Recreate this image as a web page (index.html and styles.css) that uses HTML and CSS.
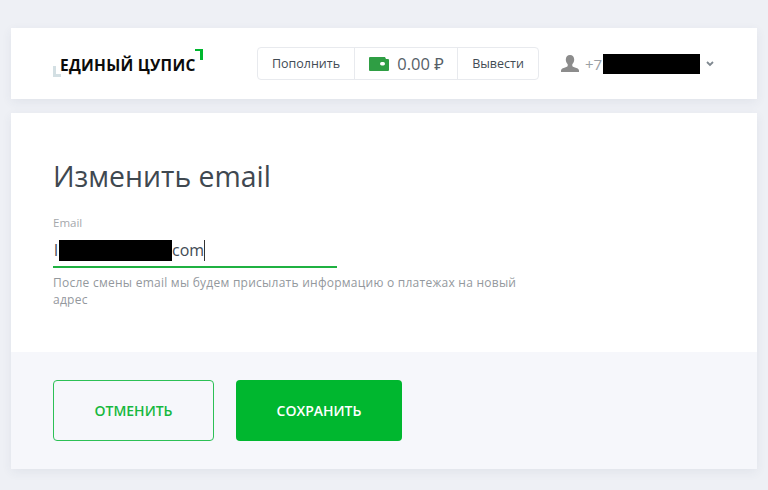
FILE: index.html
```html
<!DOCTYPE html>
<html lang="ru">
<head>
    <meta charset="UTF-8">
    <meta name="viewport" content="width=device-width, initial-scale=1.0">
    <title>Изменить email</title>
    <link rel="stylesheet" href="styles.css">
</head>
<body>
    <header class="topbar card">
        <div class="logo">
            <span class="logo-corner logo-corner-left"></span>
            <span class="logo-text">ЕДИНЫЙ ЦУПИС</span>
            <span class="logo-corner logo-corner-right"></span>
        </div>
        <div class="wallet">
            <a class="wallet-link wallet-topup">Пополнить</a>
            <div class="wallet-balance">
                <svg class="wallet-icon" width="20" height="14" viewBox="0 0 20 14">
                    <path d="M1 0h15l1 2h2a1 1 0 0 1 1 1v10a1 1 0 0 1-1 1H1a1 1 0 0 1-1-1V1a1 1 0 0 1 1-1z" fill="#2f9e44"/>
                    <rect x="11" y="5" width="5" height="3.5" rx="1.7" fill="#fff"/>
                </svg>
                <span class="wallet-sum">0.00 ₽</span>
            </div>
            <a class="wallet-link wallet-withdraw">Вывести</a>
        </div>
        <div class="user">
            <svg class="user-icon" width="18" height="17" viewBox="0 0 18 17">
                <path d="M9 0c2.6 0 4.2 1.9 4.2 4.6 0 1.9-.8 3.6-1.9 4.6v1.6c0 .7 1 1.1 2.6 1.6 2 .6 4.1 1.2 4.1 3.1V17H0v-1.5c0-1.9 2.1-2.5 4.1-3.1 1.6-.5 2.6-.9 2.6-1.6V9.2C5.6 8.2 4.8 6.5 4.8 4.6 4.8 1.9 6.4 0 9 0z" fill="#8c8c8c"/>
            </svg>
            <span class="user-code">+7</span>
            <span class="redact user-redact"></span>
            <svg class="user-arrow" width="8" height="6" viewBox="0 0 8 6">
                <path d="M1 1l3 3 3-3" fill="none" stroke="#7f8890" stroke-width="1.8"/>
            </svg>
        </div>
    </header>

    <main class="form card">
        <div class="form-body">
            <h1 class="form-title">Изменить email</h1>
            <div class="field">
                <label class="field-label">Email</label>
                <div class="field-value">
                    <span>l</span><span class="redact value-redact"></span><span>com</span><span class="caret"></span>
                </div>
            </div>
            <p class="field-hint">После смены email мы будем присылать информацию о платежах на новый адрес</p>
        </div>
        <div class="form-footer">
            <button class="btn btn-cancel">ОТМЕНИТЬ</button>
            <button class="btn btn-save">СОХРАНИТЬ</button>
        </div>
    </main>
</body>
</html>
```

FILE: styles.css
```css
* { box-sizing: border-box; }
body {
    margin: 0;
    padding: 28px 11px 21px;
    background: #eef0f5;
    font-family: 'Open Sans', 'Noto Sans', sans-serif;
    color: #424b54;
}
.card { background: #fff; box-shadow: 0 3px 10px rgba(60, 70, 100, 0.07); }

.topbar {
    display: flex;
    align-items: center;
    height: 71px;
    padding-left: 42px;
    margin-bottom: 14px;
}
.logo { position: relative; width: 204px; padding-left: 7px; padding-top: 2px; }
.logo-text {
    display: block;
    font-size: 15.5px;
    font-weight: 700;
    line-height: 22px;
    letter-spacing: 0.25px;
    color: #0b0b0b;
    white-space: nowrap;
}
.logo-corner { position: absolute; width: 8px; height: 11px; }
.logo-corner-left {
    left: 0;
    top: 14px;
    border-left: 3px solid #d3dfe3;
    border-bottom: 3px solid #d3dfe3;
}
.logo-corner-right {
    left: 142px;
    top: -3px;
    border-right: 3px solid #00b72f;
    border-top: 2px solid #00b72f;
}

.wallet {
    display: flex;
    height: 33px;
    border: 1px solid #e8eaee;
    border-radius: 4px;
    font-size: 12.5px;
}
.wallet-link, .wallet-balance { display: flex; align-items: center; justify-content: center; }
.wallet-topup { width: 97px; border-right: 1px solid #e8eaee; }
.wallet-balance { width: 103px; gap: 8px; padding-left: 1px; border-right: 1px solid #e8eaee; }
.wallet-withdraw { flex: 1; width: 80px; }
.wallet-sum { font-size: 16.5px; color: #565f68; }

.user { display: flex; align-items: center; margin-left: 22px; }
.user-code { margin-left: 6px; font-size: 15px; color: #9a9fa5; }
.redact { display: block; background: #000; }
.user-redact { width: 97px; height: 20px; margin-left: 1px; }
.user-arrow { margin-left: 6px; }

.form-body { height: 239px; padding: 43px 42px 0; }
.form-title { margin: 0 0 19px; font-size: 28.4px; font-weight: 400; line-height: 40px; color: #3f4850; }
.field { width: 284px; border-bottom: 2px solid #1fb141; height: 53px; }
.field-label { display: block; font-size: 11.5px; line-height: 16px; color: #a4a8ac; }
.field-value { display: flex; align-items: center; height: 24px; font-size: 16px; color: #424b54; margin-top: 7px; padding-left: 1px; }
.value-redact { width: 113px; height: 21px; margin-left: 1px; }
.caret { width: 1px; height: 21px; background: #333; }
.field-hint { margin: 6px 0 0; width: 480px; font-size: 12px; line-height: 17px; letter-spacing: 0.25px; color: #93989d; }

.form-footer { display: flex; gap: 22px; height: 117px; padding: 28px 42px; background: #f6f7fb; }
.btn {
    height: 61px;
    border-radius: 4px;
    font-family: inherit;
    font-size: 14px;
    font-weight: 600;
}
.btn-cancel { width: 161px; background: transparent; border: 1px solid #2cc055; color: #16b83e; }
.btn-save { width: 166px; background: #00b72f; border: 0; color: #fff; }
```
